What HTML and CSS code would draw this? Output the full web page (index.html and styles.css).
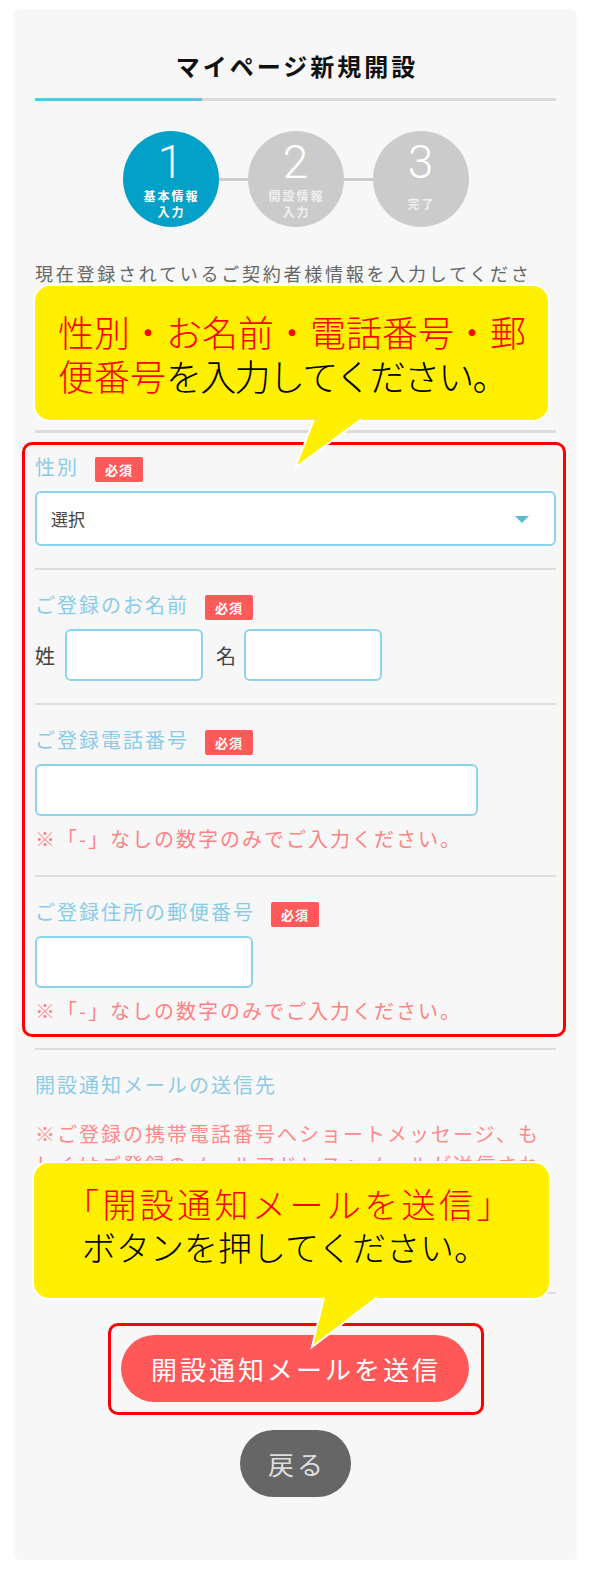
FILE: index.html
```html
<!DOCTYPE html>
<html lang="ja">
<head>
    <meta charset="UTF-8">
    <meta name="viewport" content="width=device-width, initial-scale=1.0">
    <title>マイページ新規開設</title>
    <link rel="stylesheet" href="styles.css">
</head>
<body>
    <div class="card">
        <h1 class="title">マイページ新規開設</h1>
        <div class="progress"><div class="progress-bar"></div></div>

        <ol class="steps">
            <li class="step current">
                <span class="step-num">1</span>
                <span class="step-text">基本情報<br>入力</span>
            </li>
            <li class="step-line"></li>
            <li class="step">
                <span class="step-num">2</span>
                <span class="step-text">開設情報<br>入力</span>
            </li>
            <li class="step-line"></li>
            <li class="step">
                <span class="step-num">3</span>
                <span class="step-text">完了</span>
            </li>
        </ol>

        <p class="intro">現在登録されているご契約者様情報を入力してください。</p>
        <hr class="rule">

        <div class="mark mark-form">
            <div class="field">
                <div class="field-head"><span class="field-label">性別</span><span class="req">必須</span></div>
                <div class="select"><span>選択</span></div>
            </div>
            <div class="field">
                <div class="field-head"><span class="field-label">ご登録のお名前</span><span class="req">必須</span></div>
                <div class="name-row">
                    <span class="name-key">姓</span>
                    <input class="input input-name" type="text">
                    <span class="name-key">名</span>
                    <input class="input input-name" type="text">
                </div>
            </div>
            <div class="field">
                <div class="field-head"><span class="field-label">ご登録電話番号</span><span class="req">必須</span></div>
                <input class="input input-tel" type="tel">
                <p class="note">※「-」なしの数字のみでご入力ください。</p>
            </div>
            <div class="field">
                <div class="field-head"><span class="field-label">ご登録住所の郵便番号</span><span class="req">必須</span></div>
                <input class="input input-zip" type="text">
                <p class="note">※「-」なしの数字のみでご入力ください。</p>
            </div>
        </div>
        <hr class="divider">

        <div class="section">
            <div class="field-label">開設通知メールの送信先</div>
            <p class="notice">※ご登録の携帯電話番号へショートメッセージ、もしくはご登録のメールアドレスへメールが送信されます。</p>
        </div>
        <hr class="divider">

        <div class="mark mark-btn">
            <button class="btn-send" type="button">開設通知メールを送信</button>
        </div>
        <button class="btn-back" type="button">戻る</button>

        <div class="callout callout-1">
            <span class="hl">性別・お名前・電話番号・郵<br>便番号</span><span class="tight">を入力してください。</span>
            <svg class="tail" width="513" height="190" viewBox="0 0 513 190">
                <path d="M279 133.5 L260 182 L326 133.5" fill="#ffef00" stroke="#fff" stroke-width="2"/>
            </svg>
        </div>
        <div class="callout callout-2">
            <span class="hl">「開設通知メールを送信」</span><br>ボタンを押してください。
            <svg class="tail" width="515" height="190" viewBox="0 0 515 190">
                <path d="M290 134.5 L278 184 L343 134.5" fill="#ffef00" stroke="#fff" stroke-width="2"/>
            </svg>
        </div>
    </div>
</body>
</html>
```

FILE: styles.css
```css
body {
    margin: 0;
    background: #fff;
    font-family: "Noto Sans CJK JP", "Noto Sans", sans-serif;
}
.card {
    position: relative;
    width: 561px;
    margin: 10px 0 0 15px;
    padding: 39px 20px 63px;
    box-sizing: border-box;
    background: #f7f7f7;
    border-radius: 6px;
    box-shadow: 0 0 3px rgba(0,0,0,0.07);
}
.title {
    margin: 0 0 15px;
    padding-left: 3px;
    font-size: 24px;
    line-height: 34px;
    font-weight: 700;
    letter-spacing: 3px;
    text-align: center;
    color: #111;
}
.progress {
    height: 3px;
    background: #dcd9d7;
}
.progress-bar {
    width: 167px;
    height: 100%;
    background: #5bc3ec;
}

/* steps */
.steps {
    display: flex;
    justify-content: center;
    align-items: center;
    margin: 30px 0 0;
    padding: 0;
    list-style: none;
}
.step {
    display: flex;
    flex-direction: column;
    align-items: center;
    width: 96px;
    height: 96px;
    padding-top: 8px;
    box-sizing: border-box;
    border-radius: 50%;
    background: #cbcbcb;
    color: #fff;
}
.step.current {
    background: #03a0c8;
}
.step-num {
    font-family: Roboto, "Liberation Sans", sans-serif;
    font-weight: 300;
    font-size: 46px;
    line-height: 46px;
}
.step-text {
    display: flex;
    align-items: center;
    height: 31px;
    margin-top: 3px;
    padding-left: 2px;
    font-size: 12px;
    line-height: 15.5px;
    font-weight: 700;
    letter-spacing: 2px;
    text-align: center;
    color: rgba(255,255,255,0.72);
}
.step.current .step-text {
    color: #fff;
}
.step-line {
    width: 29px;
    height: 3px;
    background: #cccccc;
}

.intro {
    margin: 31px 0 0;
    min-height: 172px;
    font-size: 18px;
    line-height: 30px;
    letter-spacing: 2.75px;
    color: #666;
}
.rule {
    margin: 0;
    height: 3px;
    border: 0;
    background: #dcdcdc;
}
.divider {
    margin: 11px 0 0;
    height: 2px;
    border: 0;
    background: #dedede;
}

/* red annotation frames */
.mark {
    border: 3px solid #ff0000;
    border-radius: 10px;
}
.mark-form {
    margin: 9px -10px 0 -13px;
    padding: 0 7px 0 10px;
}
.mark-btn {
    width: fit-content;
    margin: 29px auto 0;
    padding: 9px 12px 10px 10px;
}

/* form */
.field {
    padding: 12px 0 22px;
    border-bottom: 2px solid #dedede;
}
.field + .field {
    padding-top: 25px;
}
.field:last-child {
    padding-bottom: 9px;
    border-bottom: 0;
}
.field-head {
    display: flex;
    align-items: flex-start;
    height: 25px;
    margin-bottom: 9px;
}
.field-label {
    font-size: 20px;
    line-height: 20px;
    letter-spacing: 2px;
    color: #8ccbe8;
}
.req {
    display: inline-flex;
    align-items: center;
    justify-content: center;
    width: 48px;
    height: 25px;
    margin-left: 16px;
    border-radius: 2px;
    background: #ff5a5a;
    color: #fff;
    font-size: 13px;
    font-weight: 700;
    letter-spacing: 1px;
}
.select {
    position: relative;
    display: flex;
    align-items: center;
    height: 55px;
    padding-left: 14px;
    box-sizing: border-box;
    border: 2px solid #8dd3f0;
    border-radius: 6px;
    background: #fff;
    font-size: 17px;
    color: #444;
}
.select::after {
    content: "";
    position: absolute;
    right: 25px;
    top: 50%;
    margin-top: -3px;
    border-left: 7.5px solid transparent;
    border-right: 7.5px solid transparent;
    border-top: 7px solid #5bbccc;
}
.input {
    display: block;
    height: 52px;
    margin: 0;
    padding: 0 10px;
    box-sizing: border-box;
    border: 2px solid #8dd3f0;
    border-radius: 6px;
    background: #fff;
    font: inherit;
}
.name-row {
    display: flex;
    align-items: center;
}
.name-key {
    margin-right: 10px;
    font-size: 20px;
    color: #444;
}
.input-name {
    width: 138px;
    margin-right: 13px;
}
.name-row .input-name:last-child {
    margin-right: 0;
}
.name-row .name-key + .input-name ~ .name-key {
    margin-right: 8px;
}
.input-tel {
    width: 443px;
}
.input-zip {
    width: 218px;
}
.note {
    margin: 9px 0 0;
    font-size: 20px;
    line-height: 28px;
    letter-spacing: 2px;
    color: #ff8282;
}
.section {
    padding: 20px 0 70px;
}
.section .field-label {
    line-height: 30px;
}
.notice {
    margin: 18px 0 0;
    font-size: 20px;
    line-height: 31px;
    letter-spacing: 2px;
    color: #ff8a8a;
}

/* buttons */
.btn-send {
    display: block;
    width: 348px;
    height: 67px;
    padding: 0 0 0 3px;
    border: 0;
    border-radius: 34px;
    background: #fe5858;
    color: #fff;
    font: inherit;
    font-size: 26px;
    letter-spacing: 3px;
}
.btn-back {
    display: block;
    width: 111px;
    height: 67px;
    margin: 15px auto 0;
    padding: 0 0 0 3px;
    border: 0;
    border-radius: 34px;
    background: #666;
    color: #ddd;
    font: inherit;
    font-size: 26px;
    letter-spacing: 3px;
}

/* yellow callouts */
.callout {
    position: absolute;
    box-sizing: border-box;
    border-radius: 15px;
    background: #ffef00;
    box-shadow: 0 0 0 2px #fff;
    color: #000;
    font-weight: 300;
    white-space: nowrap;
}
.callout .hl {
    color: #ff0000;
}
.callout-1 {
    left: 20px;
    top: 276px;
    width: 513px;
    height: 134px;
    padding: 23px 0 0 23px;
    font-size: 36px;
    line-height: 44px;
}
.callout-1 .tight {
    letter-spacing: -1.7px;
}
.callout-2 {
    left: 19px;
    top: 1153px;
    width: 515px;
    height: 135px;
    padding: 19px 0 0 48px;
    font-size: 34px;
    line-height: 43px;
    text-indent: -17px;
}
.callout-2 .hl {
    letter-spacing: 3.4px;
}
.tail {
    position: absolute;
    left: 0;
    top: 0;
    overflow: visible;
}
```
